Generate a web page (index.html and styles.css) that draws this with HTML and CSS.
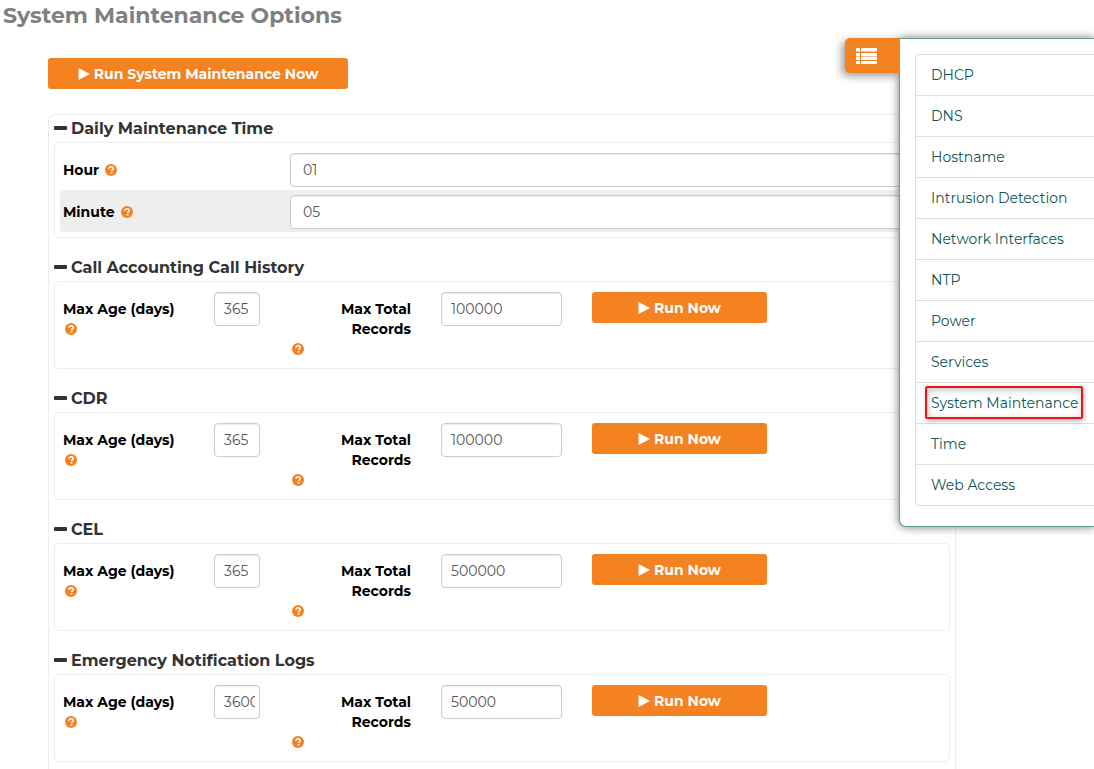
FILE: index.html
```html
<!DOCTYPE html>
<html lang="en">
<head>
<meta charset="utf-8">
<title>System Maintenance Options</title>
<link rel="stylesheet" href="styles.css">
</head>
<body>
<svg class="defs" aria-hidden="true">
  <symbol id="help" viewBox="0 0 12 12"><circle cx="6" cy="6" r="6" fill="#f58220"/><path d="M4 4.8C4 3.4 5 2.8 6.1 2.8s2.1.7 2.1 1.8c0 1.3-1.5 1.4-1.5 2.5" fill="none" stroke="#fff" stroke-width="1.6"/><path d="M5.7 8h1.7v1.5H5.7z" fill="#fff"/></symbol>
  <symbol id="play" viewBox="0 0 12 12"><path d="M.5 0 12 6 .5 12z" fill="#fff"/></symbol>
</svg>
<main class="page">
  <h1 class="title">System Maintenance Options</h1>
  <button class="btn btn-all" type="button"><svg class="play"><use href="#play"/></svg>Run System Maintenance Now</button>
  <form class="panel">
    <section class="group">
      <h2 class="heading"><span class="minus"></span>Daily Maintenance Time</h2>
      <div class="box">
        <div class="time-row">
          <label class="label" for="hour">Hour<svg class="help"><use href="#help"/></svg></label>
          <input class="field" id="hour" type="text" value="01">
        </div>
        <div class="time-row shaded">
          <label class="label" for="minute">Minute<svg class="help"><use href="#help"/></svg></label>
          <input class="field" id="minute" type="text" value="05">
        </div>
      </div>
    </section>
    <section class="group">
      <h2 class="heading"><span class="minus"></span>Call Accounting Call History</h2>
      <div class="box log-row">
        <label class="age-label" for="age1">Max Age (days)<svg class="help"><use href="#help"/></svg></label>
        <input class="field small" id="age1" type="text" value="365">
        <label class="total-label" for="total1">Max Total Records<svg class="help"><use href="#help"/></svg></label>
        <input class="field small" id="total1" type="text" value="100000">
        <button class="btn" type="button"><svg class="play"><use href="#play"/></svg>Run Now</button>
      </div>
    </section>
    <section class="group">
      <h2 class="heading"><span class="minus"></span>CDR</h2>
      <div class="box log-row">
        <label class="age-label" for="age2">Max Age (days)<svg class="help"><use href="#help"/></svg></label>
        <input class="field small" id="age2" type="text" value="365">
        <label class="total-label" for="total2">Max Total Records<svg class="help"><use href="#help"/></svg></label>
        <input class="field small" id="total2" type="text" value="100000">
        <button class="btn" type="button"><svg class="play"><use href="#play"/></svg>Run Now</button>
      </div>
    </section>
    <section class="group">
      <h2 class="heading"><span class="minus"></span>CEL</h2>
      <div class="box log-row">
        <label class="age-label" for="age3">Max Age (days)<svg class="help"><use href="#help"/></svg></label>
        <input class="field small" id="age3" type="text" value="365">
        <label class="total-label" for="total3">Max Total Records<svg class="help"><use href="#help"/></svg></label>
        <input class="field small" id="total3" type="text" value="500000">
        <button class="btn" type="button"><svg class="play"><use href="#play"/></svg>Run Now</button>
      </div>
    </section>
    <section class="group">
      <h2 class="heading"><span class="minus"></span>Emergency Notification Logs</h2>
      <div class="box log-row">
        <label class="age-label" for="age4">Max Age (days)<svg class="help"><use href="#help"/></svg></label>
        <input class="field small" id="age4" type="text" value="3600">
        <label class="total-label" for="total4">Max Total Records<svg class="help"><use href="#help"/></svg></label>
        <input class="field small" id="total4" type="text" value="50000">
        <button class="btn" type="button"><svg class="play"><use href="#play"/></svg>Run Now</button>
      </div>
    </section>
  </form>
</main>
<aside class="drawer">
  <button class="tab" type="button" aria-label="Menu">
    <svg width="21" height="16" viewBox="0 0 21 16" fill="#fff"><path d="M0 0h4v3H0zM5 0h16v3H5zM0 5h4v3H0zM5 5h16v3H5zM0 9h4v3H0zM5 9h16v3H5zM0 13h4v3H0zM5 13h16v3H5z"/><path opacity=".5" d="M0 3h4v1H0zM5 3h16v1H5zM0 8h4v1H0zM5 8h16v1H5z"/></svg>
  </button>
  <nav class="menu">
    <a class="item" href="#">DHCP</a>
    <a class="item" href="#">DNS</a>
    <a class="item" href="#">Hostname</a>
    <a class="item" href="#">Intrusion Detection</a>
    <a class="item" href="#">Network Interfaces</a>
    <a class="item" href="#">NTP</a>
    <a class="item" href="#">Power</a>
    <a class="item" href="#">Services</a>
    <a class="item" href="#"><span class="current">System Maintenance</span></a>
    <a class="item" href="#">Time</a>
    <a class="item" href="#">Web Access</a>
  </nav>
</aside>
</body>
</html>
```
FILE: styles.css
```css
* { box-sizing: border-box; }
body {
  margin: 0;
  height: 100vh;
  overflow: hidden;
  position: relative;
  background: #fff;
  color: #000;
  font: 14px/20px Montserrat, Inter, "Open Sans", sans-serif;
}
input, button { font: inherit; }
.defs { position: absolute; width: 0; height: 0; }
.page { display: flex; flex-direction: column; height: 100%; }
.title { margin: 0 0 0 3px; font-size: 22px; line-height: 32px; font-weight: 700; color: #808080; }
.btn {
  display: flex;
  align-items: center;
  justify-content: center;
  gap: 4px;
  height: 31px;
  padding: 0;
  border: 0;
  border-radius: 3px;
  background: #f58220;
  color: #fff;
  font-size: 14px;
  font-weight: 700;
}
.btn-all { flex: none; width: 300px; margin: 26px 0 25px 48px; }
.play { width: 12px; height: 12px; }
.panel {
  flex: 1;
  margin: 0 138px 0 48px;
  padding: 3px 5px 0;
  border: 1px solid #eee;
  border-bottom: 0;
  border-radius: 8px 8px 0 0;
}
.group { margin-bottom: 19px; }
.heading { display: flex; align-items: center; gap: 4px; margin: 0; height: 24px; padding-bottom: 3px; font-size: 16px; font-weight: 700; color: #333; }
.minus { width: 13px; height: 4px; margin-bottom: 2px; border-radius: 1px; background: #333; }
.box { border: 1px solid #eee; border-radius: 5px; padding: 5px; }
.time-row { display: grid; grid-template-columns: 227px 1fr; height: 42px; padding: 5px 3px 3px; border-radius: 3px; }
.shaded { background: #eee; }
.label { display: flex; align-items: center; font-weight: 700; }
.help { width: 12px; height: 12px; }
.label .help { margin-left: 6px; }
.field {
  width: 100%;
  height: 34px;
  padding: 0 12px;
  border: 1px solid #ccc;
  border-radius: 4px;
  background: #fff;
  box-shadow: inset 0 1px 1px rgba(0, 0, 0, .08);
  color: #555;
  font-size: 14px;
  font-weight: 400;
}
.small { padding: 0 4px 0 9px; }
.log-row {
  display: grid;
  grid-template-columns: 121px 46px 121px 121px 175px;
  column-gap: 30px;
  align-items: start;
  height: 88px;
  padding: 10px 8px;
}
.log-row .age-label { padding-top: 7px; font-weight: 700; }
.age-label .help { display: block; margin: 4px 0 0 2px; }
.total-label { padding: 7px 0 0 40px; text-align: right; font-weight: 700; }
.total-label .help { display: block; margin: 4px 0 0 -38px; }
.drawer {
  position: absolute;
  top: 38px;
  right: 0;
  width: 195px;
  padding: 15px 0 20px 15px;
  border: 1px solid #65a188;
  border-right: 0;
  border-radius: 0 0 0 7px;
  background: #fff;
  box-shadow: 0 0 10px rgba(0, 0, 0, .55);
}
.tab {
  position: absolute;
  top: -1px;
  left: -55px;
  width: 55px;
  height: 35px;
  padding: 6px 0 0 11px;
  border: 0;
  border-radius: 5px 0 0 5px;
  background: #f58220;
  box-shadow: -3px 3px 8px rgba(0, 0, 0, .4);
  clip-path: inset(-12px 0 -12px -12px);
  text-align: left;
}
.menu { border: 1px solid #ddd; border-right: 0; border-radius: 4px 0 0 4px; }
.item { display: block; height: 41px; padding: 10px 0 0 15px; border-bottom: 1px solid #ddd; color: #0d5554; font-size: 14px; font-weight: 400; text-decoration: none; white-space: nowrap; }
.item:last-child { border-bottom: 0; height: 40px; }
.current { display: inline-block; margin: -8px 0 0 -6px; padding: 5px 3px 4px 4px; border: 2px solid #f01418; border-radius: 2px; box-shadow: 1px 2px 4px rgba(0, 0, 0, .3), inset 1px 2px 6px rgba(0, 0, 0, .25); }
```
